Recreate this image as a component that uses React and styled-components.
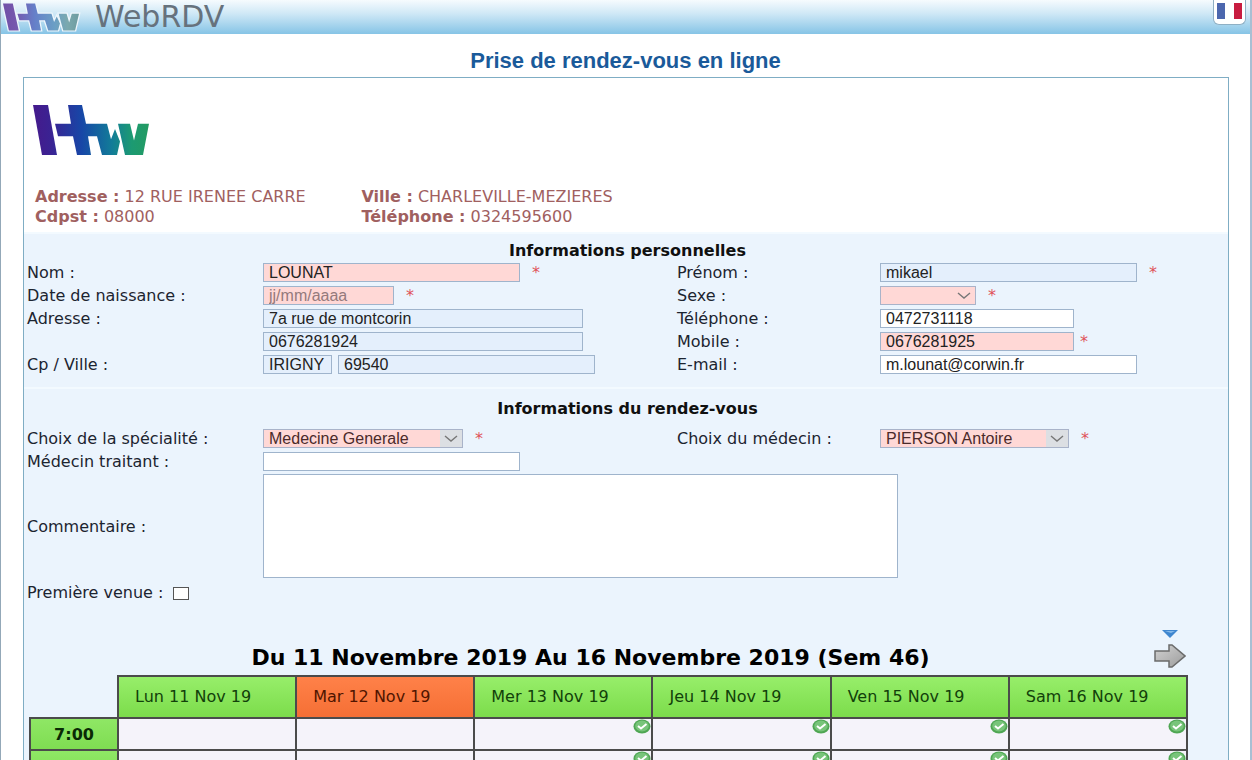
import { useState } from "react";
import styled, { createGlobalStyle } from "styled-components";

const GlobalStyle = createGlobalStyle`
  * {
    box-sizing: border-box;
  }

  body {
    margin: 0;
    background: #ffffff;
    color: #1c2430;
    font-family: "DejaVu Sans", Verdana, sans-serif;
    font-size: 16px;
  }
`;

const Page = styled.div`
  height: 100vh;
  overflow: hidden;
  border-left: 1px solid #93a8b8;
  border-right: 2px solid #a9bfd3;
`;

const Header = styled.header`
  display: flex;
  align-items: flex-start;
  justify-content: space-between;
  height: 34px;
  background: linear-gradient(#f6fbfe 0%, #cfe8f6 40%, #86c4e6 100%);
`;

const Brand = styled.a`
  display: flex;
  align-items: center;
  gap: 16px;
  padding-left: 2px;
  color: #66727d;
  font-size: 30px;
  line-height: 34px;
  text-decoration: none;
`;

const LangButton = styled.button`
  display: flex;
  align-items: flex-end;
  justify-content: center;
  width: 33px;
  height: 25px;
  margin-right: 4px;
  padding: 0 0 5px;
  border: 1px solid #8fb0c4;
  border-top: none;
  border-radius: 0 0 6px 6px;
  background: #ffffff;
`;

const PageTitle = styled.h1`
  margin: 0;
  padding: 15px 0 4px;
  color: #1a5a9a;
  font-family: "Liberation Sans", Arial, sans-serif;
  font-size: 22px;
  line-height: 24px;
  text-align: center;
`;

const Panel = styled.main`
  margin: 0 21px 0 22px;
  border: 1px solid #7fadc4;
`;

const Practice = styled.section`
  padding: 26px 10px 5px 9px;
`;

const PracticeInfo = styled.dl`
  display: grid;
  grid-template-columns: 327fr 858fr;
  margin: 27px 0 0;
  padding-left: 2px;
  color: #a0605f;
  font-size: 16px;
  line-height: 20px;

  dt,
  dd {
    display: inline;
    margin: 0;
  }

  dt {
    font-weight: bold;
  }
`;

const Section = styled.section`
  padding: ${(props) => props.$top || 7}px 0 11px 3px;
  background: #ebf4fd;
  border-top: 2px solid #f3faff;
`;

const SectionTitle = styled.h2`
  margin: 0;
  padding-bottom: ${(props) => props.$space || 0}px;
  color: #101010;
  font-size: 16px;
  line-height: 20px;
  text-align: center;
`;

const Fields = styled.div`
  display: grid;
  grid-template-columns: 236fr 414fr 203fr 348fr;
  grid-auto-rows: minmax(23px, auto);
  align-items: center;
`;

const Label = styled.label`
  grid-column: ${(props) => props.$col || 1};
  line-height: 20px;
`;

const Field = styled.div`
  grid-column: ${(props) => props.$col || 2};
  display: flex;
  align-items: center;
  gap: 6px;
`;

const tones = {
  required: "#ffd8d6",
  filled: "#e4effc",
  plain: "#ffffff",
};

const Input = styled.input`
  width: ${(props) => props.$width}px;
  height: 19px;
  padding: 0 5px;
  border: 1px solid #9fb4cc;
  border-radius: 0;
  background: ${(props) => tones[props.$tone || "filled"]};
  color: #222222;
  font-family: "Liberation Sans", Arial, sans-serif;
  font-size: 16px;
  line-height: 16px;

  &::placeholder {
    color: #957a7c;
    opacity: 1;
  }
`;

const SelectBox = styled.div`
  position: relative;
  width: ${(props) => props.$width}px;
  height: 19px;

  svg {
    position: absolute;
    top: 6px;
    right: 5px;
    pointer-events: none;
  }
`;

const StyledSelect = styled.select`
  appearance: none;
  width: 100%;
  height: 100%;
  padding: 0 22px 0 5px;
  border: 1px solid #a9b3c9;
  border-radius: 0;
  background: ${(props) =>
    props.$button
      ? "linear-gradient(to left, #dcdfe3 22px, #ffd8d6 22px)"
      : "#ffd8d6"};
  color: #4a2a2a;
  font-family: "Liberation Sans", Arial, sans-serif;
  font-size: 16px;
`;

const Star = styled.span`
  padding-left: ${(props) => (props.$near ? 0 : 6)}px;
  color: #e0525a;
  font-size: 16px;
  line-height: 18px;
`;

const Textarea = styled.textarea`
  display: block;
  width: 635px;
  max-width: 100%;
  height: 104px;
  margin: 1px 0 2px;
  border: 1px solid #9fb4cc;
  resize: none;
`;

const WideField = styled.div`
  grid-column: 2 / -1;
`;

const CheckRow = styled.div`
  display: flex;
  align-items: center;
  gap: 10px;
  height: 26px;
`;

const Checkbox = styled.input`
  appearance: none;
  width: 16px;
  height: 13px;
  margin: 0;
  border: 1px solid #555555;
  background: #ffffff;

  &:checked {
    background: #5a7fa8;
  }
`;

const Planning = styled.section`
  padding: 9px 40px 0 5px;
  background: #ebf4fd;
`;

const WeekBar = styled.div`
  display: grid;
  grid-template-columns: 1fr 36px;
  align-items: end;
  padding-bottom: 2px;
`;

const WeekTitle = styled.h2`
  margin: 0;
  color: #000000;
  font-size: 22px;
  line-height: 30px;
  text-align: center;
`;

const WeekNav = styled.div`
  display: flex;
  flex-direction: column;
  align-items: center;
  gap: 3px;
  padding-bottom: 2px;
`;

const IconButton = styled.button`
  display: block;
  padding: 0;
  border: none;
  background: none;
  cursor: pointer;
`;

const Calendar = styled.table`
  width: 100%;
  border-collapse: collapse;
  table-layout: fixed;
`;

const Corner = styled.td`
  width: 88px;
`;

const Day = styled.th`
  height: 42px;
  padding: 0 0 2px 16px;
  border: 2px solid #4b4b4b;
  background: ${(props) =>
    props.$today
      ? "linear-gradient(#ff8149, #f56f35)"
      : "linear-gradient(#97ee6a, #7cdc4b)"};
  color: ${(props) => (props.$today ? "#501500" : "#12400a")};
  font-size: 16px;
  font-weight: normal;
  text-align: left;
`;

const Hour = styled.th`
  height: 32px;
  padding: 0;
  border: 2px solid #4b4b4b;
  background: linear-gradient(#8fe765, #7fdd52);
  color: #0a2a05;
  font-size: 16px;
`;

const Slot = styled.td`
  height: 32px;
  padding: 0;
  border: 2px solid #4b4b4b;
  background: #f5f3fa;
  vertical-align: top;

  button {
    margin-left: auto;
  }
`;

function HwLogo({ id, width, height, soft }) {
  return (
    <svg
      width={width}
      height={height}
      viewBox="0 0 116 50"
      preserveAspectRatio="none"
      overflow="visible"
      role="img"
      aria-label="Hw"
    >
      <defs>
        <linearGradient id={id} gradientUnits="userSpaceOnUse" x1="0" x2="116" y1="0" y2="0">
          <stop offset="0" stopColor={soft ? "#7050a8" : "#451a8c"} />
          <stop offset="0.16" stopColor={soft ? "#7657ad" : "#3a2393"} />
          <stop offset="0.42" stopColor={soft ? "#6580c9" : "#1747a7"} />
          <stop offset="0.68" stopColor={soft ? "#6b9fc5" : "#127c98"} />
          <stop offset="0.85" stopColor={soft ? "#7ba9ae" : "#1c9a72"} />
          <stop offset="1" stopColor={soft ? "#6e9ca0" : "#239b62"} />
        </linearGradient>
      </defs>
      <g
        fill={`url(#${id})`}
        stroke={soft ? "#eef6fc" : "none"}
        strokeWidth={soft ? 4 : 0}
        paintOrder="stroke"
      >
        <path d="M0 1H15L24 49H9Z" />
        <path d="M35 1H49L53 19H74L78 34L82 24L87 36L84 49H69L64 31H55L58 49H44L40 31H25L22 19H38Z" />
        <path d="M85 19H97L101 35L105 19H116L110 49H92Z" />
      </g>
    </svg>
  );
}

function Flag() {
  return (
    <svg width="25" height="16" aria-hidden="true">
      <rect width="25" height="16" fill="#ffffff" />
      <rect width="8" height="16" fill="#4c67ae" />
      <rect x="17" width="8" height="16" fill="#c81c40" />
    </svg>
  );
}

function Chevron() {
  return (
    <svg width="14" height="8" aria-hidden="true">
      <path d="M1 1L7 6L13 1" fill="none" stroke="#777777" strokeWidth="1.4" />
    </svg>
  );
}

function DownIcon() {
  return (
    <svg width="16" height="8" aria-hidden="true">
      <path d="M0 0H16L8 8Z" fill="#3f86cf" />
      <path d="M3 1H13L9 3Z" fill="#85b9ea" />
    </svg>
  );
}

function NextIcon() {
  return (
    <svg width="32" height="24" aria-hidden="true">
      <defs>
        <linearGradient id="next" x1="0" x2="1" y1="0" y2="1">
          <stop offset="0" stopColor="#d2d2d2" />
          <stop offset="1" stopColor="#9c9c9c" />
        </linearGradient>
      </defs>
      <path
        d="M1 7H15V1H18L31 12L18 23H15V17H1Z"
        fill="url(#next)"
        stroke="#6b6b6b"
        strokeWidth="1.5"
      />
    </svg>
  );
}

function FreeIcon() {
  return (
    <svg width="18" height="15" aria-hidden="true">
      <ellipse cx="9" cy="7.5" rx="8.5" ry="7" fill="#4fa653" />
      <ellipse cx="9" cy="7" rx="6.8" ry="5.4" fill="#78c47a" />
      <path d="M5 7L8 9.5L13.5 5" fill="none" stroke="#ffffff" strokeWidth="2" />
    </svg>
  );
}

function Select({ id, width, options, button }) {
  return (
    <SelectBox $width={width}>
      <StyledSelect id={id} $button={button}>
        {options.map((option) => (
          <option key={option}>{option}</option>
        ))}
      </StyledSelect>
      <Chevron />
    </SelectBox>
  );
}

const days = [
  { label: "Lun 11 Nov 19", free: false },
  { label: "Mar 12 Nov 19", free: false, today: true },
  { label: "Mer 13 Nov 19", free: true },
  { label: "Jeu 14 Nov 19", free: true },
  { label: "Ven 15 Nov 19", free: true },
  { label: "Sam 16 Nov 19", free: true },
];

const slots = [
  { id: 1, hour: "7:00" },
  { id: 2, hour: "" },
];

function App() {
  const [firstVisit, setFirstVisit] = useState(false);

  return (
    <>
      <GlobalStyle />
      <Page>
        <Header>
          <Brand href="#">
            <HwLogo id="hw-small" width={76} height={28} soft />
            WebRDV
          </Brand>
          <LangButton type="button" aria-label="Français">
            <Flag />
          </LangButton>
        </Header>
        <PageTitle>Prise de rendez-vous en ligne</PageTitle>
        <Panel>
          <Practice>
            <HwLogo id="hw-large" width={116} height={52} />
            <PracticeInfo>
              <div>
                <dt>Adresse :</dt> <dd>12 RUE IRENEE CARRE</dd>
              </div>
              <div>
                <dt>Ville :</dt> <dd>CHARLEVILLE-MEZIERES</dd>
              </div>
              <div>
                <dt>Cdpst :</dt> <dd>08000</dd>
              </div>
              <div>
                <dt>Téléphone :</dt> <dd>0324595600</dd>
              </div>
            </PracticeInfo>
          </Practice>

          <Section>
            <SectionTitle>Informations personnelles</SectionTitle>
            <Fields>
              <Label htmlFor="nom">Nom :</Label>
              <Field>
                <Input id="nom" $width={257} $tone="required" defaultValue="LOUNAT" />
                <Star>*</Star>
              </Field>
              <Label htmlFor="prenom" $col={3}>Prénom :</Label>
              <Field $col={4}>
                <Input id="prenom" $width={257} defaultValue="mikael" />
                <Star>*</Star>
              </Field>

              <Label htmlFor="naissance">Date de naissance :</Label>
              <Field>
                <Input id="naissance" $width={131} $tone="required" placeholder="jj/mm/aaaa" />
                <Star>*</Star>
              </Field>
              <Label htmlFor="sexe" $col={3}>Sexe :</Label>
              <Field $col={4}>
                <Select id="sexe" width={96} options={[""]} />
                <Star>*</Star>
              </Field>

              <Label htmlFor="adresse">Adresse :</Label>
              <Field>
                <Input id="adresse" $width={320} defaultValue="7a rue de montcorin" />
              </Field>
              <Label htmlFor="telephone" $col={3}>Téléphone :</Label>
              <Field $col={4}>
                <Input id="telephone" $width={194} $tone="plain" defaultValue="0472731118" />
              </Field>

              <Field>
                <Input $width={320} aria-label="Adresse (suite)" defaultValue="0676281924" />
              </Field>
              <Label htmlFor="mobile" $col={3}>Mobile :</Label>
              <Field $col={4}>
                <Input id="mobile" $width={194} $tone="required" defaultValue="0676281925" />
                <Star $near>*</Star>
              </Field>

              <Label htmlFor="cp">Cp / Ville :</Label>
              <Field>
                <Input id="cp" $width={69} defaultValue="IRIGNY" />
                <Input $width={257} aria-label="Ville" defaultValue="69540" />
              </Field>
              <Label htmlFor="email" $col={3}>E-mail :</Label>
              <Field $col={4}>
                <Input id="email" $width={257} $tone="plain" defaultValue="m.lounat@corwin.fr" />
              </Field>
            </Fields>
          </Section>

          <Section $top={10}>
            <SectionTitle $space={8}>Informations du rendez-vous</SectionTitle>
            <Fields>
              <Label htmlFor="specialite">Choix de la spécialité :</Label>
              <Field>
                <Select id="specialite" width={200} options={["Medecine Generale"]} button />
                <Star>*</Star>
              </Field>
              <Label htmlFor="medecin" $col={3}>Choix du médecin :</Label>
              <Field $col={4}>
                <Select id="medecin" width={189} options={["PIERSON Antoire"]} button />
                <Star>*</Star>
              </Field>

              <Label htmlFor="traitant">Médecin traitant :</Label>
              <Field>
                <Input id="traitant" $width={257} $tone="plain" />
              </Field>

              <Label htmlFor="commentaire">Commentaire :</Label>
              <WideField>
                <Textarea id="commentaire" />
              </WideField>
            </Fields>
            <CheckRow>
              <Label htmlFor="premiere">Première venue :</Label>
              <Checkbox
                id="premiere"
                type="checkbox"
                checked={firstVisit}
                onChange={(e) => setFirstVisit(e.target.checked)}
              />
            </CheckRow>
          </Section>

          <Planning>
            <WeekBar>
              <WeekTitle>Du 11 Novembre 2019 Au 16 Novembre 2019 (Sem 46)</WeekTitle>
              <WeekNav>
                <IconButton type="button" aria-label="Choisir une date">
                  <DownIcon />
                </IconButton>
                <IconButton type="button" aria-label="Semaine suivante">
                  <NextIcon />
                </IconButton>
              </WeekNav>
            </WeekBar>
            <Calendar>
              <thead>
                <tr>
                  <Corner />
                  {days.map((day) => (
                    <Day key={day.label} $today={day.today} scope="col">
                      {day.label}
                    </Day>
                  ))}
                </tr>
              </thead>
              <tbody>
                {slots.map((slot) => (
                  <tr key={slot.id}>
                    <Hour scope="row">{slot.hour}</Hour>
                    {days.map((day) => (
                      <Slot key={day.label}>
                        {day.free && (
                          <IconButton type="button" aria-label="Réserver">
                            <FreeIcon />
                          </IconButton>
                        )}
                      </Slot>
                    ))}
                  </tr>
                ))}
              </tbody>
            </Calendar>
          </Planning>
        </Panel>
      </Page>
    </>
  );
}

export default App;
